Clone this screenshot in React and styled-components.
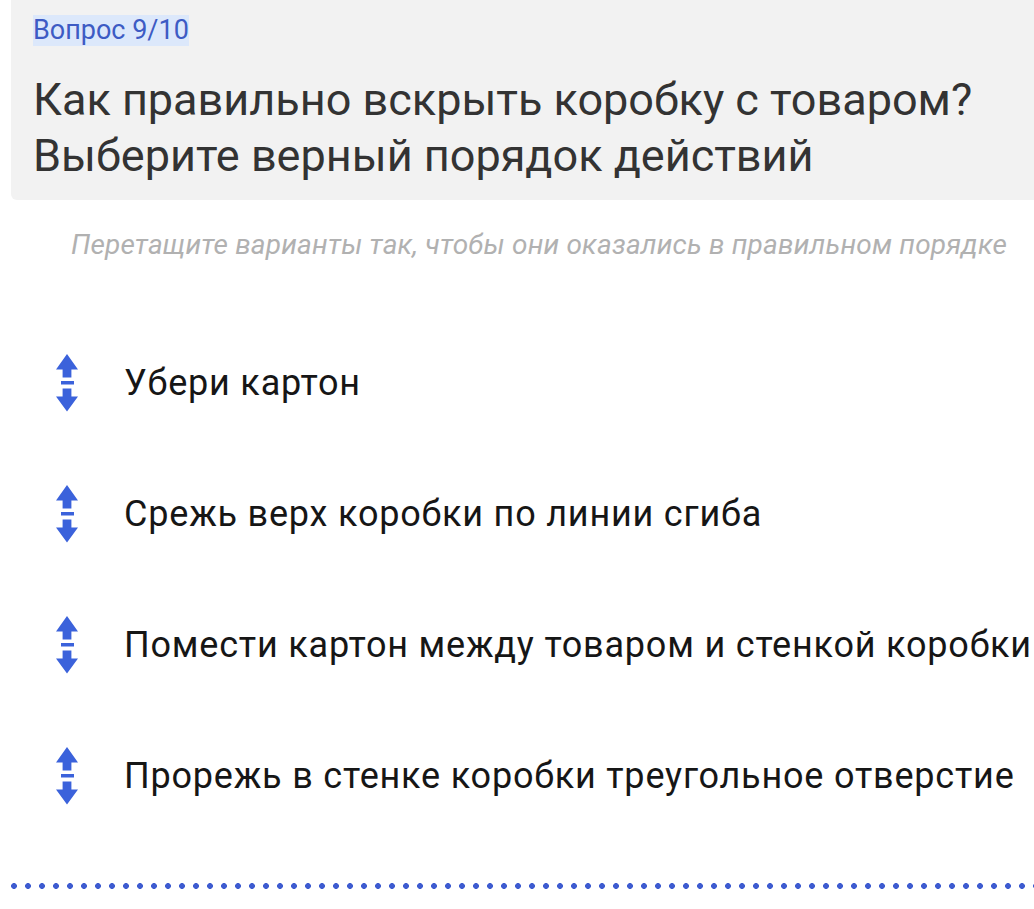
import React from 'react';
import styled, { createGlobalStyle } from 'styled-components';

const steps = [
  'Убери картон',
  'Срежь верх коробки по линии сгиба',
  'Помести картон между товаром и стенкой коробки',
  'Прорежь в стенке коробки треугольное отверстие',
];

const GlobalStyle = createGlobalStyle`
  body {
    margin: 0;
    background: #ffffff;
    font-family: Roboto, "Noto Sans", sans-serif;
    overflow: hidden;
  }
`;

const Page = styled.div`
  width: 1056px;
  padding-left: 11px;
`;

const QuestionCard = styled.div`
  background: #f2f2f2;
  border-radius: 0 0 6px 6px;
  padding: 15px 22px 16px;
`;

const Counter = styled.span`
  display: inline-block;
  background: #dce8fb;
  color: #3d5bc4;
  font-size: 27px;
  line-height: 31px;
`;

const Title = styled.h1`
  margin: 26px 0 0;
  font-size: 45px;
  line-height: 56px;
  font-weight: 400;
  color: #333333;
`;

const Hint = styled.p`
  margin: 28px 0 0;
  text-align: center;
  font-style: italic;
  font-size: 28px;
  letter-spacing: 0.18px;
  line-height: 34px;
  color: #b1b1b1;
`;

const StepList = styled.ul`
  list-style: none;
  margin: 55px 0 0;
  padding: 0 0 0 44px;
`;

const Step = styled.li`
  height: 131px;
  display: flex;
  align-items: center;
  gap: 45px;
  font-size: 36px;
  letter-spacing: 0.8px;
  color: #161616;
  white-space: nowrap;
`;

const DragHandle = styled.svg`
  flex: none;
  width: 24px;
  height: 58px;
  fill: #3b62db;
`;

const Dots = styled.div`
  margin-top: 38px;
  height: 14px;
  background-image: radial-gradient(circle, #3d5bd0 2.6px, transparent 3.2px);
  background-size: 14px 14px;
  background-position: -4px 0;
`;

const Handle = () => (
  <DragHandle viewBox="0 0 24 58">
    <path d="M1 15.5L12 0l11 15.5h-6.6v8H7.6v-8z" />
    <rect x="6" y="27" width="13" height="3.5" />
    <path d="M7.6 34.5h8.8v8H23L12 57.5 1 42.5h6.6z" />
  </DragHandle>
);

const App = () => (
  <>
    <GlobalStyle />
    <Page>
      <QuestionCard>
        <Counter>Вопрос 9/10</Counter>
        <Title>
          Как правильно вскрыть коробку с товаром?
          <br />
          Выберите верный порядок действий
        </Title>
      </QuestionCard>
      <Hint>Перетащите варианты так, чтобы они оказались в правильном порядке</Hint>
      <StepList>
        {steps.map((text) => (
          <Step key={text}>
            <Handle />
            {text}
          </Step>
        ))}
      </StepList>
      <Dots />
    </Page>
  </>
);

export default App;
